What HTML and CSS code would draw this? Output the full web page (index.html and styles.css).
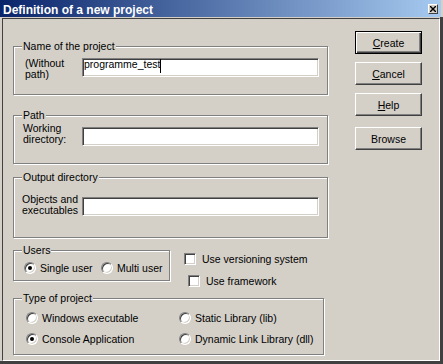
FILE: index.html
```html
<!DOCTYPE html>
<html lang="en">
<head>
    <meta charset="UTF-8">
    <title>Definition of a new project</title>
    <link rel="stylesheet" href="styles.css">
</head>
<body>
    <div class="window">
        <div class="titlebar">
            <span class="title">Definition of a new project</span>
            <span class="close-btn">
                <svg width="6" height="6" viewBox="0 0 6 6"><path d="M0 0L6 6M6 0L0 6" stroke="#000" stroke-width="1.4"/></svg>
            </span>
        </div>
        <div class="frame">
            <div class="client">
                <div class="groups">
                    <fieldset class="group name-group">
                        <legend>Name of the project</legend>
                        <div class="field-row">
                            <div class="field-label name-label">(Without<br>path)</div>
                            <div class="field">programme_test<span class="caret"></span></div>
                        </div>
                    </fieldset>

                    <fieldset class="group path-group">
                        <legend>Path</legend>
                        <div class="field-row">
                            <div class="field-label">Working<br>directory:</div>
                            <div class="field"></div>
                        </div>
                    </fieldset>

                    <fieldset class="group output-group">
                        <legend>Output directory</legend>
                        <div class="field-row">
                            <div class="field-label output-label">Objects and<br>executables</div>
                            <div class="field"></div>
                        </div>
                    </fieldset>

                    <div class="options-row">
                        <fieldset class="group users-group">
                            <legend>Users</legend>
                            <div class="radio-list">
                                <div class="option"><span class="radio on"></span>Single user</div>
                                <div class="option"><span class="radio"></span>Multi user</div>
                            </div>
                        </fieldset>
                        <div class="checks">
                            <div class="check"><span class="checkbox"></span>Use versioning system</div>
                            <div class="check framework"><span class="checkbox"></span>Use framework</div>
                        </div>
                    </div>

                    <fieldset class="group type-group">
                        <legend>Type of project</legend>
                        <div class="type-grid">
                            <div class="option"><span class="radio"></span>Windows executable</div>
                            <div class="option"><span class="radio"></span>Static Library (lib)</div>
                            <div class="option"><span class="radio on"></span>Console Application</div>
                            <div class="option"><span class="radio"></span>Dynamic Link Library (dll)</div>
                        </div>
                    </fieldset>
                </div>

                <div class="buttons">
                    <button class="btn default"><u>C</u>reate</button>
                    <button class="btn"><u>C</u>ancel</button>
                    <button class="btn"><u>H</u>elp</button>
                    <button class="btn browse">Browse</button>
                </div>
            </div>
        </div>
    </div>
</body>
</html>
```

FILE: styles.css
```css
* {
    box-sizing: border-box;
}
body {
    margin: 0;
    background: #d4d0c8;
    font-family: "Liberation Sans", Arial, sans-serif;
    font-size: 10.5px;
    color: #000;
}
.window {
    width: 443px;
    height: 364px;
    display: flex;
    flex-direction: column;
    overflow: hidden;
}
.titlebar {
    width: 441px;
    height: 17px;
    padding: 3px 3px 0 3px;
    display: flex;
    align-items: flex-start;
    justify-content: space-between;
    background: linear-gradient(to right, #0a246a, #a6caf0);
}
.title {
    color: #fff;
    font-weight: bold;
    font-size: 12px;
    line-height: 14px;
}
.close-btn {
    width: 10px;
    height: 10px;
    margin-top: 1px;
    display: flex;
    align-items: center;
    justify-content: center;
    background: #d4d0c8;
    border: 1px solid;
    border-color: #fff #404040 #404040 #fff;
}
.frame {
    flex: 1;
    padding: 1px 0 0 2px;
    border-right: 3px solid #404040;
    border-bottom: 3px solid #404040;
}
.client {
    height: 100%;
    padding-left: 10px;
    display: flex;
    align-items: flex-start;
    border: 1px solid;
    border-color: #404040 #fff #fff #404040;
}
.groups {
    width: 315px;
    margin-top: 21px;
}

/* group boxes */
.group {
    margin: 0;
    min-width: 0;
    padding: 0 8px 0 9px;
    border: 1px solid #808080;
    box-shadow: inset 1px 1px #fff, 1px 1px #fff;
}
.group legend {
    padding: 0 1px;
    margin-left: -1px;
    line-height: 13px;
    background: #d4d0c8;
}
.name-group {
    padding-top: 5px;
    padding-bottom: 14px;
}
.path-group {
    margin-top: 14px;
    padding-top: 1px;
    padding-bottom: 17px;
}
.output-group {
    margin-top: 7px;
    padding-top: 10px;
    padding-bottom: 21px;
}
.field-row {
    display: flex;
    align-items: flex-start;
}
.field-label {
    width: 59px;
    line-height: 11px;
}
.name-label {
    padding-left: 2px;
}
.output-label {
    width: 60px;
    margin-left: -1px;
}
.field {
    width: 237px;
    height: 19px;
    padding: 0 0 0 1px;
    line-height: 11px;
    display: flex;
    align-items: flex-start;
    background: #fff;
    border: 1px solid;
    border-color: #808080 #fff #fff #808080;
    box-shadow: inset 1px 1px #404040, inset -1px -1px #d4d0c8;
}
.path-group .field {
    margin-top: 4px;
}
.output-group .field {
    margin-top: 3px;
}
.caret {
    width: 1px;
    height: 14px;
    background: #000;
}

/* users + checkboxes */
.options-row {
    display: flex;
    align-items: flex-start;
    margin-top: 6px;
}
.users-group {
    width: 157px;
    padding: 5px 0 6px 10px;
}
.users-group legend {
    margin-left: -2px;
}
.radio-list {
    display: flex;
}
.users-group .option:first-child {
    width: 77px;
}
.option {
    height: 12px;
    line-height: 12px;
    display: flex;
    align-items: center;
    gap: 4px;
    white-space: nowrap;
}
.radio {
    position: relative;
    flex: none;
    width: 12px;
    height: 12px;
    border-radius: 50%;
    background: #fff;
    border: 1px solid;
    border-color: #808080 #fff #fff #808080;
    box-shadow: inset 1px 1px #404040, inset -1px -1px #d4d0c8;
}
.radio.on::after {
    content: "";
    position: absolute;
    left: 3px;
    top: 3px;
    width: 4px;
    height: 4px;
    border-radius: 50%;
    background: #000;
}
.checks {
    margin-left: 14px;
    padding-top: 9px;
    display: flex;
    flex-direction: column;
    gap: 10px;
}
.check {
    height: 12px;
    line-height: 12px;
    display: flex;
    align-items: center;
    gap: 6px;
    white-space: nowrap;
}
.check.framework {
    margin-left: 4px;
}
.checkbox {
    flex: none;
    width: 12px;
    height: 12px;
    background: #fff;
    border: 1px solid;
    border-color: #808080 #fff #fff #808080;
    box-shadow: inset 1px 1px #404040, inset -1px -1px #d4d0c8;
}

/* type of project */
.type-group {
    width: 311px;
    margin-top: 5px;
    padding: 7px 0 9px 12px;
}
.type-group legend {
    margin-left: -4px;
}
.type-grid {
    display: grid;
    grid-template-columns: 153px auto;
    row-gap: 9px;
}

/* buttons */
.buttons {
    margin-left: 27px;
    margin-top: 12px;
    display: flex;
    flex-direction: column;
    gap: 8px;
}
.btn {
    width: 67px;
    height: 23px;
    padding: 0;
    font-family: "Liberation Sans", Arial, sans-serif;
    font-size: 10.5px;
    color: #000;
    background: #d4d0c8;
    border: 1px solid;
    border-color: #fff #404040 #404040 #fff;
    box-shadow: inset -1px -1px #808080;
}
.btn.default {
    border-color: #000;
    box-shadow: inset 1px 1px #fff, inset -1px -1px #404040, inset -2px -2px #808080;
}
.btn.browse {
    margin-top: 3px;
}
```
